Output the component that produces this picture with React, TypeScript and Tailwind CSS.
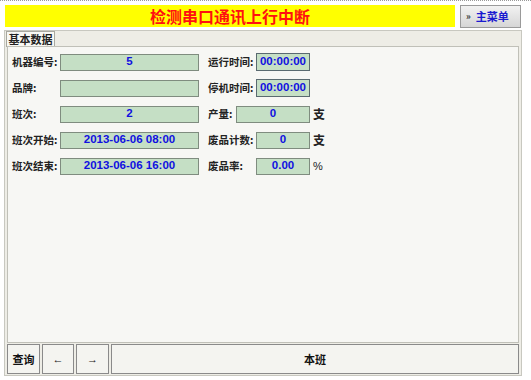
const cjk = { fontFamily: '"Noto Sans CJK SC", "Liberation Sans", sans-serif' };
const lat = { fontFamily: '"Liberation Sans", "Noto Sans CJK SC", sans-serif' };

function Field({ value, w }: { value: string; w: string }) {
  return (
    <div
      className={`${w} h-[17px] bg-[#c5dfc5] border border-[#7f8c7f] flex items-center justify-center text-[11.5px] font-bold text-[#1010e0]`}
      style={lat}
    >
      {value}
    </div>
  );
}

function TimeField({ value }: { value: string }) {
  return (
    <div
      className="w-[54px] h-[18px] bg-[#c5dfc5] border border-[#5a6a70] flex items-center justify-center text-[11.5px] font-bold text-[#1010e0]"
      style={lat}
    >
      {value}
    </div>
  );
}

function Label({ text, w }: { text: string; w: string }) {
  return (
    <div className={`${w} text-[10.5px] font-bold text-[#222]`} style={cjk}>
      {text}
    </div>
  );
}

export default function App() {
  return (
    <div className="w-[531px] h-[380px] bg-white border-t border-dotted border-[#999] overflow-hidden">
      <div className="flex px-[5px] pt-[4px] gap-[5px]">
        <div
          className="w-[450px] h-[22px] bg-[#ffff00] flex items-center justify-center text-[16px] font-bold text-[#ff1010]"
          style={cjk}
        >
          检测串口通讯上行中断
        </div>
        <div
          className="w-[61px] h-[23px] bg-gradient-to-b from-[#f2f2f2] to-[#d6d6d6] border border-[#9a9a9a] flex items-center pl-[5px] gap-[5px] text-[11px] font-bold text-[#1a1ad0]"
          style={cjk}
        >
          <span className="text-[9px] text-[#333]">»</span>
          <span>主菜单</span>
        </div>
      </div>

      <div className="mx-[4px] mt-[2px] w-[518px] h-[346px] bg-[#eeede6] border border-[#c8c8c0] flex flex-col">
        <div className="flex h-[15px] px-[1px]">
          <div
            className="w-[49px] h-[16px] bg-[#f8f8f4] border border-b-0 border-[#a8a8a0] flex items-center justify-center text-[11px] font-bold text-[#222]"
            style={cjk}
          >
            基本数据
          </div>
        </div>
        <div className="mx-[2px] h-[297px] bg-[#f7f7f4] border border-[#c0c0b8] flex flex-col gap-[8px] pt-[6px] pl-[4px]">
          <div className="flex items-center h-[18px]">
            <Label text="机器编号:" w="w-[48px]" />
            <Field value="5" w="w-[139px]" />
            <div className="w-[9px]" />
            <Label text="运行时间:" w="w-[48px]" />
            <TimeField value="00:00:00" />
          </div>
          <div className="flex items-center h-[18px]">
            <Label text="品牌:" w="w-[48px]" />
            <Field value="" w="w-[139px]" />
            <div className="w-[9px]" />
            <Label text="停机时间:" w="w-[48px]" />
            <TimeField value="00:00:00" />
          </div>
          <div className="flex items-center h-[18px]">
            <Label text="班次:" w="w-[48px]" />
            <Field value="2" w="w-[139px]" />
            <div className="w-[9px]" />
            <Label text="产量:" w="w-[28px]" />
            <Field value="0" w="w-[74px]" />
            <span className="ml-[3px] text-[12px] font-bold text-[#222]" style={cjk}>支</span>
          </div>
          <div className="flex items-center h-[18px]">
            <Label text="班次开始:" w="w-[48px]" />
            <Field value="2013-06-06 08:00" w="w-[139px]" />
            <div className="w-[9px]" />
            <Label text="废品计数:" w="w-[48px]" />
            <Field value="0" w="w-[54px]" />
            <span className="ml-[3px] text-[12px] font-bold text-[#222]" style={cjk}>支</span>
          </div>
          <div className="flex items-center h-[18px]">
            <Label text="班次结束:" w="w-[48px]" />
            <Field value="2013-06-06 16:00" w="w-[139px]" />
            <div className="w-[9px]" />
            <Label text="废品率:" w="w-[48px]" />
            <Field value="0.00" w="w-[54px]" />
            <span className="ml-[3px] text-[11px] text-[#222]" style={lat}>%</span>
          </div>
        </div>
        <div className="flex gap-[2px] mx-[2px] mt-[1px] h-[30px]">
          <div
            className="w-[33px] h-full bg-[#f4f4f0] border border-[#8a8a8a] flex items-center justify-center text-[11px] font-bold text-[#111]"
            style={cjk}
          >
            查询
          </div>
          <div className="w-[32px] h-full bg-[#f4f4f0] border border-[#8a8a8a] flex items-center justify-center text-[11px] text-[#111]" style={lat}>
            ←
          </div>
          <div className="w-[33px] h-full bg-[#f4f4f0] border border-[#8a8a8a] flex items-center justify-center text-[11px] text-[#111]" style={lat}>
            →
          </div>
          <div
            className="flex-1 h-full bg-[#f4f4f0] border border-[#8a8a8a] flex items-center justify-center text-[11px] font-bold text-[#111]"
            style={cjk}
          >
            本班
          </div>
        </div>
      </div>
    </div>
  );
}
